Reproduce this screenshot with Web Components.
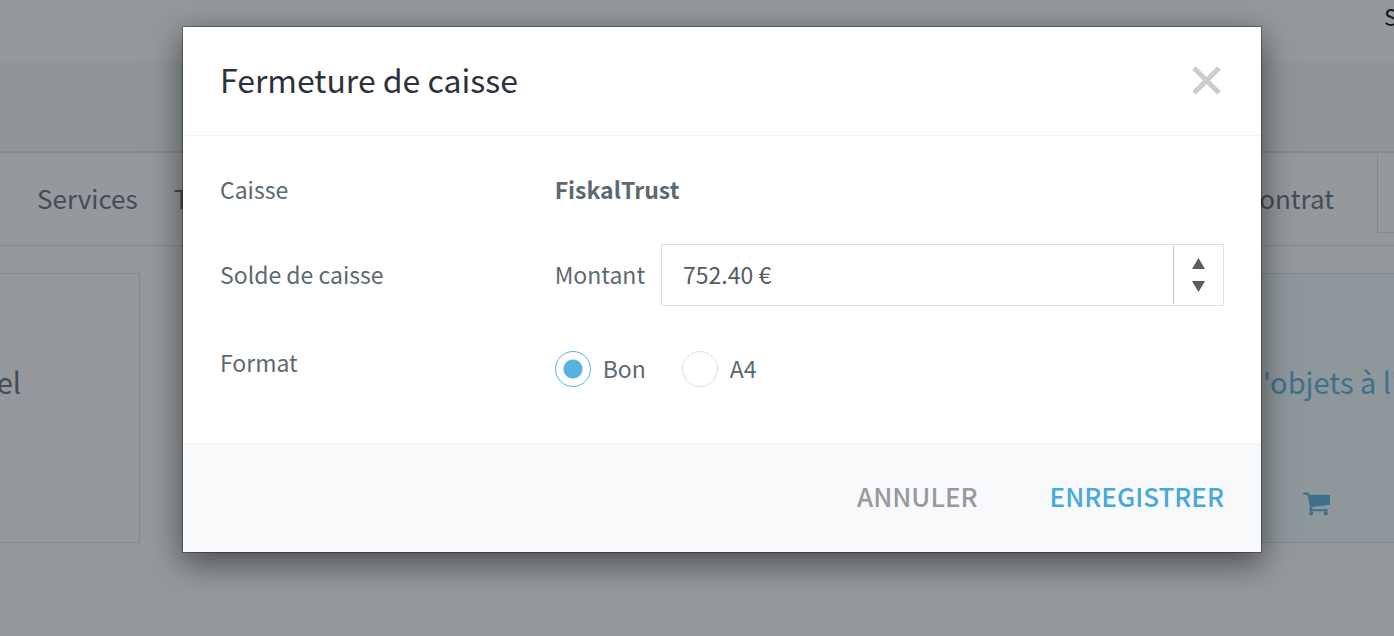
<!DOCTYPE html>
<html lang="fr">
<head>
<meta charset="utf-8">
<title>Fermeture de caisse</title>
<style>
  html, body { margin: 0; min-height: 100vh; }
  body {
    position: relative;
    overflow: hidden;
    background: #fff;
    color: #5c6872;
    font-family: "Noto Sans CJK SC", "Noto Sans", sans-serif;
    font-size: 23px;
    line-height: 36px;
  }
</style>
</head>
<body>
<pos-page>
  <pos-card slot="cards" class="start">el</pos-card>
  <pos-card slot="cards" class="end" cart>'objets à l'</pos-card>
</pos-page>
<pos-modal heading="Fermeture de caisse">
  <form-row label="Caisse"><b>FiskalTrust</b></form-row>
  <form-row label="Solde de caisse"><amount-field label="Montant" value="752.40 €"></amount-field></form-row>
  <form-row label="Format" class="last"><format-choice></format-choice></form-row>
  <pos-button slot="actions">ANNULER</pos-button>
  <pos-button slot="actions" primary>ENREGISTRER</pos-button>
</pos-modal>

<script>
const define = (name, render) => customElements.define(name, class extends HTMLElement {
  constructor() {
    super();
    this.attachShadow({ mode: 'open' });
  }
  connectedCallback() {
    this.shadowRoot.innerHTML = render(this);
  }
});

define('pos-page', () => `
  <style>
    :host { display: block; }
    header { display: flex; justify-content: flex-end; height: 62px; box-sizing: border-box; color: #000; line-height: 32px; }
    header span { width: 10px; white-space: nowrap; }
    .band { height: 89px; background: #f2f8f8; }
    nav { display: flex; align-items: center; height: 92px; border-top: 2px solid #dce0e1; border-bottom: 1px solid #dce0e1; padding-left: 37px; font-size: 26px; }
    nav a { padding-bottom: 2px; color: inherit; text-decoration: none; }
    nav a + a { margin-left: 36px; }
    nav a.right { margin-left: auto; margin-right: 43px; }
    .box { align-self: flex-start; width: 16px; height: 79px; border-left: 1px solid #dce0e1; border-bottom: 1px solid #dce0e1; }
    main { display: flex; justify-content: space-between; margin-top: 27px; }
  </style>
  <header><span>S</span></header>
  <div class="band"></div>
  <nav><a href="#services">Services</a><a href="#t">T</a><a class="right" href="#contrat">ontrat</a><div class="box"></div></nav>
  <main><slot name="cards"></slot></main>`);

define('pos-card', el => `
  <style>
    :host { display: flex; flex-direction: column; box-sizing: border-box; height: 270px; border: 1px solid #dce0e1; padding-top: 89px; font-size: 29px; white-space: nowrap; }
    :host(.start) { width: 140px; border-left: 0; padding-right: 118px; align-items: flex-end; }
    :host(.end) { width: 230px; border-right: 0; padding-left: 98px; color: #4fb0dd; background: #f0fcff; }
    svg { display: block; width: 27px; height: 24px; margin: 93px 0 0 40px; fill: currentColor; }
  </style>
  <slot></slot>
  ${el.hasAttribute('cart') ? `<svg viewBox="0 256 1664 1408" aria-hidden="true"><path d="M640 1536q0 52-38 90t-90 38-90-38-38-90 38-90 90-38 90 38 38 90zm896 0q0 52-38 90t-90 38-90-38-38-90 38-90 90-38 90 38 38 90zm128-1088v512q0 24-16.500 42.500t-40.500 21.500l-1044 122q13 60 13 70 0 16-24 64h920q26 0 45 19t19 45-19 45-45 19h-1024q-26 0-45-19t-19-45q0-11 8-31.500t16-36 21.500-40 15.500-29.500l-177-823h-204q-26 0-45-19t-19-45 19-45 45-19h256q16 0 28.500 6.500t19.500 15.500 13 24.500 8 26 5.500 29.500 4.500 26h1201q26 0 45 19t19 45z"/></svg>` : ''}`);

define('pos-modal', el => `
  <style>
    :host { position: absolute; inset: 0; box-sizing: border-box; padding: 26px 132px 0 182px; background: rgba(44, 50, 58, .5); }
    section { border: 1px solid rgba(0, 0, 0, .3); background: #fff; background-clip: padding-box; box-shadow: 0 10px 30px rgba(0, 0, 0, .5); }
    header { display: flex; align-items: center; justify-content: space-between; box-sizing: border-box; height: 109px; padding: 0 37px 2px; border-bottom: 1px solid #f1f3f4; }
    h1 { margin: 0; padding-bottom: 2px; font-size: 32px; line-height: 48px; font-weight: 400; color: #2c323c; }
    button { display: block; padding: 0; margin-right: 3px; border: 0; background: none; }
    svg { display: block; width: 29px; height: 29px; stroke: #ccc; stroke-width: 5; }
    .body { padding: 36px 37px 56px; color: #5c6970; line-height: 34px; }
    footer { display: flex; justify-content: flex-end; align-items: center; gap: 72px; box-sizing: border-box; height: 109px; padding: 0 37px 4px; border-top: 1px solid #f0f2f3; background: #f8f9fb; }
  </style>
  <section role="dialog" aria-labelledby="title">
    <header>
      <h1 id="title">${el.getAttribute('heading')}</h1>
      <button type="button" aria-label="Fermer"><svg viewBox="0 0 29 29"><path d="M2 2 27 27M27 2 2 27"/></svg></button>
    </header>
    <div class="body"><slot></slot></div>
    <footer><slot name="actions"></slot></footer>
  </section>`);

define('form-row', el => `
  <style>
    :host { display: grid; grid-template-columns: 1fr 2fr; align-items: center; margin-bottom: 36px; }
    :host(.last) { align-items: start; margin-bottom: 0; padding-top: 3px; }
    span, ::slotted(b) { display: block; padding-bottom: 2px; }
  </style>
  <span>${el.getAttribute('label')}</span>
  <div><slot></slot></div>`);

define('amount-field', el => `
  <style>
    :host { display: flex; align-items: center; gap: 16px; }
    label { padding-bottom: 2px; }
    .field { flex: 1; display: flex; box-sizing: border-box; height: 62px; border: 1px solid #dde2e4; padding: 1px 0; }
    input { flex: 1; min-width: 0; border: 0; outline: 0; padding: 0 21px 2px; background: none; font: inherit; color: #555b63; }
    .spin { display: flex; flex-direction: column; justify-content: center; gap: 12px; width: 49px; border-left: 1px solid #c4c7c9; }
    button { display: block; align-self: center; padding: 0; border: 0; background: none; }
    svg { display: block; width: 13px; height: 11px; fill: #5c5c5c; }
  </style>
  <label for="amount">${el.getAttribute('label')}</label>
  <div class="field">
    <input id="amount" type="text" value="${el.getAttribute('value')}">
    <div class="spin">
      <button type="button" aria-label="Augmenter"><svg viewBox="0 0 13 11"><path d="M6.500 0 13 11H0z"/></svg></button>
      <button type="button" aria-label="Diminuer"><svg viewBox="0 0 13 11"><path d="M0 0H13L6.500 11z"/></svg></button>
    </div>
  </div>`);

define('format-choice', () => `
  <style>
    :host { display: flex; gap: 36px; padding-top: 6px; }
    label { display: flex; align-items: flex-start; gap: 12px; }
    input { appearance: none; box-sizing: border-box; width: 36px; height: 36px; margin: 0; border: 1px solid #d8dee1; border-radius: 50%; background: #fff; }
    input:checked { border-color: #53b2e0; background: radial-gradient(circle, #56b3df 9px, #fff 10px); }
  </style>
  <label><input type="radio" name="format" checked>Bon</label>
  <label><input type="radio" name="format">A4</label>`);

define('pos-button', () => `
  <style>
    :host { display: block; }
    button { display: block; padding: 0; border: 0; background: none; font: inherit; font-size: 26px; font-weight: 500; color: #98999e; }
    :host([primary]) button { color: #4aa9dc; }
  </style>
  <button type="button"><slot></slot></button>`);
</script>
</body>
</html>
